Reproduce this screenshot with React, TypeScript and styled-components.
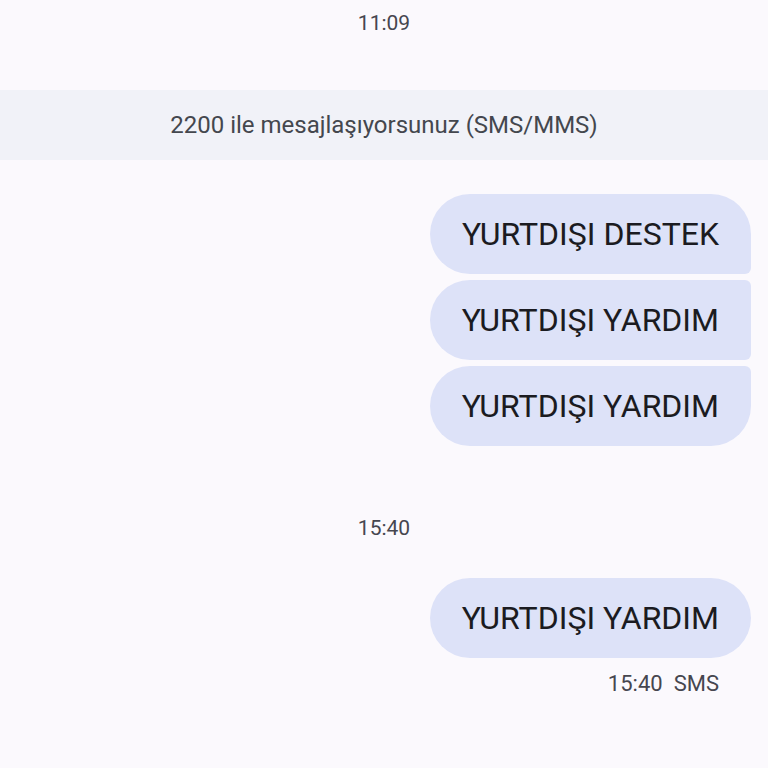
import styled, { createGlobalStyle } from 'styled-components'

const GlobalStyle = createGlobalStyle`
    html, body {
        margin: 0;
        padding: 0;
        background: #fbf9fd;
    }
    body {
        font-family: Roboto, 'Noto Sans', sans-serif;
    }
`

const Screen = styled.div`
    width: 768px;
    height: 768px;
    overflow: hidden;
    background: #fbf9fd;
    display: flex;
    flex-direction: column;
`

const Timestamp = styled.div<{ $top: number; $bottom: number }>`
    text-align: center;
    font-size: 21px;
    color: #46464f;
    line-height: 28px;
    margin-top: ${({ $top }) => $top}px;
    margin-bottom: ${({ $bottom }) => $bottom}px;
`

const Banner = styled.div`
    background: #f1f2f8;
    height: 70px;
    display: flex;
    align-items: center;
    justify-content: center;
    font-size: 24px;
    color: #44474e;
`

const Group = styled.div<{ $top?: number }>`
    display: flex;
    flex-direction: column;
    align-items: flex-end;
    gap: 6px;
    padding-right: 17px;
    margin-top: ${({ $top }) => $top ?? 0}px;
`

type Pos = 'single' | 'first' | 'middle' | 'last'

const radii: Record<Pos, string> = {
    single: '40px',
    first: '40px 40px 6px 40px',
    middle: '40px 6px 6px 40px',
    last: '40px 6px 40px 40px',
}

const Bubble = styled.div<{ $pos: Pos }>`
    background: #dde2f8;
    color: #1b1b21;
    font-size: 32px;
    line-height: 40px;
    padding: 20px 32px;
    border-radius: ${({ $pos }) => radii[$pos]};
`

const Meta = styled.div`
    align-self: flex-end;
    padding-right: 49px;
    margin-top: 12px;
    font-size: 22px;
    line-height: 28px;
    color: #46464f;
    display: flex;
    gap: 11px;
`

export default function App() {
    return (
        <Screen>
            <GlobalStyle />
            <Timestamp $top={9} $bottom={53}>11:09</Timestamp>
            <Banner>2200 ile mesajlaşıyorsunuz (SMS/MMS)</Banner>
            <Group $top={34}>
                <Bubble $pos='first'>YURTDIŞI DESTEK</Bubble>
                <Bubble $pos='middle'>YURTDIŞI YARDIM</Bubble>
                <Bubble $pos='last'>YURTDIŞI YARDIM</Bubble>
            </Group>
            <Timestamp $top={68} $bottom={36}>15:40</Timestamp>
            <Group>
                <Bubble $pos='single'>YURTDIŞI YARDIM</Bubble>
            </Group>
            <Meta>
                <span>15:40</span>
                <span>SMS</span>
            </Meta>
        </Screen>
    )
}
